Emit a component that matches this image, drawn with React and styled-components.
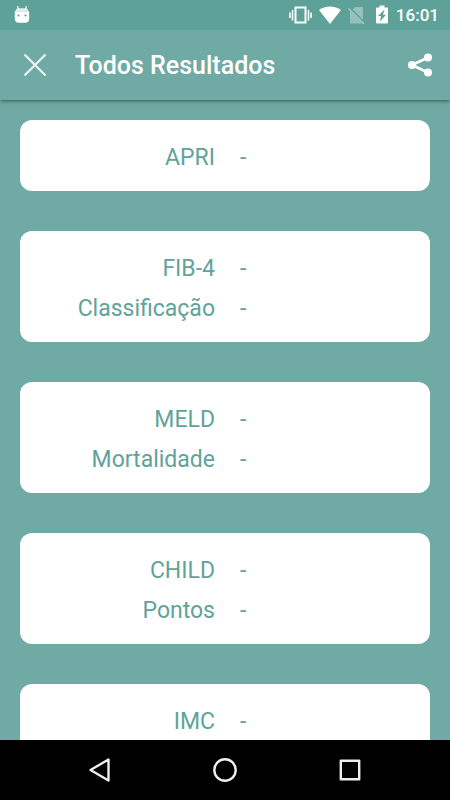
import React from 'react';
import styled, { createGlobalStyle } from 'styled-components';

const results = [
    [{ label: 'APRI', value: '-' }],
    [{ label: 'FIB-4', value: '-' }, { label: 'Classificação', value: '-' }],
    [{ label: 'MELD', value: '-' }, { label: 'Mortalidade', value: '-' }],
    [{ label: 'CHILD', value: '-' }, { label: 'Pontos', value: '-' }],
    [{ label: 'IMC', value: '-' }],
];

const StatusIcons = () => (
    <Status>
        <svg width="23" height="22" viewBox="0 0 23 22" fill="none" stroke="#fff" strokeWidth="2">
            <rect x="6.5" y="3.500" width="10" height="15" />
            <path d="M3.500 6v10.500M.9 8.500v5.500M19.500 6v10.500M22.100 8.500v5.500" strokeWidth="1.6" />
        </svg>
        <svg width="22" height="22" viewBox="0 0 22 22" fill="#fff">
            <path d="M11 20 0 6Q4.600 2.500 11 2.500T22 6z" />
        </svg>
        <svg width="21" height="22" viewBox="0 0 21 22">
            <path d="M7 3h8v14.500L4.500 6zM2 6.500 14.500 19.500H2z" fill="#fff" opacity="0.35" />
            <path d="M1 4 16.500 19.500" stroke="#5da199" strokeWidth="3" />
            <path d="M.5 4.500 16 20" stroke="#fff" strokeWidth="1.4" opacity="0.45" />
        </svg>
        <svg width="12" height="22" viewBox="0 0 12 22">
            <path d="M3.500 1.500h5v2H11q1 0 1 1v14q0 1-1 1H1q-1 0-1-1v-14q0-1 1-1h2.500z" fill="#fff" />
            <path d="M8.500 5.500 2 12h3l-1 5.500 6-6.800H7z" fill="#5da199" />
        </svg>
    </Status>
);

const App = () => (
    <Screen>
        <GlobalStyle />
        <StatusBar>
            <svg width="16" height="20" viewBox="0 0 16 20">
                <path d="M3.500 1 4.700 5M12.500 1 11.300 5" stroke="#fff" strokeWidth="1.4" opacity="0.8" />
                <path d="M1.500 6Q2 3.200 4.500 3.200h7Q14 3.200 14.500 6z" fill="#fff" opacity="0.8" />
                <path d="M.8 6.300h14.400v7Q15.200 17.800 11 17.800H5Q.8 17.800.8 13.300z" fill="#fff" />
                <circle cx="4.500" cy="10.500" r="1.100" fill="#5da199" />
                <circle cx="11.500" cy="10.500" r="1.100" fill="#5da199" />
            </svg>
            <StatusGroup>
                <StatusIcons />
                <time>16:01</time>
            </StatusGroup>
        </StatusBar>
        <Header>
            <IconButton aria-label="Fechar">
                <svg width="24" height="24" viewBox="0 0 24 24" stroke="#fff" strokeWidth="2.400" opacity="0.85">
                    <path d="m1.500 1.500 21 21m0-21-21 21" />
                </svg>
            </IconButton>
            <Title>Todos Resultados</Title>
            <IconButton aria-label="Compartilhar">
                <svg width="26" height="24" viewBox="0 0 26 24" fill="#fff">
                    <path d="M21 4.500 5 12l16 7.500" fill="none" stroke="#fff" strokeWidth="2.800" />
                    <circle cx="21" cy="4.500" r="4" />
                    <circle cx="5" cy="12" r="4" />
                    <circle cx="21" cy="19.500" r="4" />
                </svg>
            </IconButton>
        </Header>
        <Content>
            {results.map((rows) => (
                <Card key={rows[0].label}>
                    {rows.map(({ label, value }) => (
                        <Row key={label}>
                            <Label>{label}</Label>
                            <Value>{value}</Value>
                        </Row>
                    ))}
                </Card>
            ))}
        </Content>
        <NavBar>
            <NavButton aria-label="Voltar">
                <svg width="26" height="26" viewBox="0 0 26 26">
                    <path d="M21.500 2.500v21L3.500 13z" />
                </svg>
            </NavButton>
            <NavButton aria-label="Início">
                <svg width="26" height="26" viewBox="0 0 26 26">
                    <circle cx="13" cy="13" r="10.700" />
                </svg>
            </NavButton>
            <NavButton aria-label="Recentes">
                <svg width="26" height="26" viewBox="0 0 26 26">
                    <rect x="3.800" y="3.800" width="18.400" height="18.400" />
                </svg>
            </NavButton>
        </NavBar>
    </Screen>
);

const GlobalStyle = createGlobalStyle`
    * {
        box-sizing: border-box;
    }
    body {
        margin: 0;
        font-family: Roboto, sans-serif;
    }
    svg {
        display: block;
    }
`;

const Screen = styled.div`
    display: flex;
    flex-direction: column;
    height: 100vh;
    background-color: #70aaa4;
`;

const StatusBar = styled.div`
    display: flex;
    align-items: center;
    justify-content: space-between;
    flex-shrink: 0;
    height: 30px;
    padding: 0 11px 0 14px;
    background-color: #5da199;
    color: #fff;
    font-size: 17px;
    font-weight: 500;
    z-index: 2;
`;

const StatusGroup = styled.div`
    display: flex;
    align-items: center;
    gap: 8px;
`;

const Status = styled.div`
    display: flex;
    align-items: center;
    gap: 7px;
`;

const Header = styled.header`
    display: flex;
    align-items: center;
    flex-shrink: 0;
    height: 70px;
    padding: 0 17px 0 23px;
    background-color: #70aaa4;
    box-shadow: 0 1px 4px rgba(0, 0, 0, 0.5);
    z-index: 1;
`;

const Title = styled.h1`
    flex: 1;
    margin: 0 0 0 28px;
    color: #fff;
    font-size: 25px;
    font-weight: 500;
`;

const IconButton = styled.button`
    padding: 0;
    border: 0;
    background: none;
`;

const Content = styled.main`
    display: flex;
    flex-direction: column;
    flex: 1;
    gap: 40px;
    min-height: 0;
    padding: 20px;
    overflow: hidden;
`;

const Card = styled.section`
    display: flex;
    flex-direction: column;
    flex-shrink: 0;
    gap: 13px;
    padding: 24px 0 20px;
    border-radius: 12px;
    background-color: #fff;
    color: #5fa39b;
    font-size: 23px;
    line-height: 27px;
`;

const Row = styled.div`
    display: grid;
    grid-template-columns: 1fr 1fr;
`;

const Label = styled.span`
    padding-right: 10px;
    text-align: right;
`;

const Value = styled.span`
    padding-left: 15px;
`;

const NavBar = styled.nav`
    display: grid;
    grid-template-columns: repeat(3, 1fr);
    flex-shrink: 0;
    height: 60px;
    padding: 0 38px;
    background-color: #000;
`;

const NavButton = styled.button`
    display: flex;
    align-items: center;
    justify-content: center;
    padding: 0;
    border: 0;
    background: none;

    svg {
        fill: none;
        stroke: #eee;
        stroke-width: 2.4;
        stroke-linejoin: round;
    }
`;

export default App;
